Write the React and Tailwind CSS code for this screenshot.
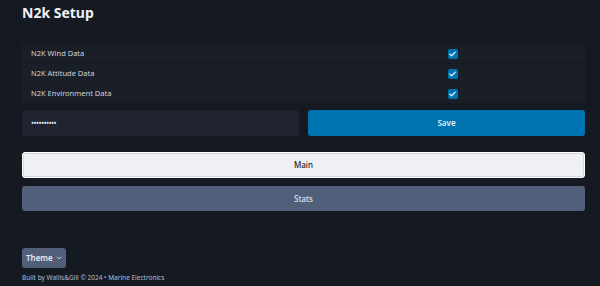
import React from "react";

function Check() {
  return (
    <span className="flex h-[10px] w-[10px] items-center justify-center rounded-[2px] bg-[#0074b0]">
      <svg width="7" height="6" viewBox="0 0 8 6" fill="none">
        <path d="M1 3.2 L3 5 L7 1" stroke="#e8eef5" strokeWidth="1.4" strokeLinecap="round" strokeLinejoin="round" />
      </svg>
    </span>
  );
}

function Row({ label }) {
  return (
    <div className="grid h-[19px] grid-cols-2 items-center bg-[#1a1e27] px-[9px]">
      <span className="pt-[1px] text-[7.5px] text-[#d0d5de]">{label}</span>
      <span className="flex items-center pl-[144px]">
        <Check />
      </span>
    </div>
  );
}

export default function App() {
  return (
    <div
      className="flex h-[286px] w-[600px] flex-col bg-[#151922] pl-[22px] pr-[15px] text-[#d8dce4]"
      style={{ fontFamily: '"Noto Sans", "Open Sans", sans-serif' }}
    >
      <h1 className="mt-[2px] h-[22px] text-[14px] font-bold leading-[22px] text-[#eef0f4]">N2k Setup</h1>
      <div className="mt-[20px] flex flex-col gap-px">
        <Row label="N2K Wind Data" />
        <Row label="N2K Attitude Data" />
        <Row label="N2K Environment Data" />
      </div>
      <div className="mt-[7px] grid grid-cols-2 gap-[9px]">
        <div className="flex h-[26px] items-center rounded-[3px] bg-[#1f2330] px-[9px] text-[8px] tracking-[-0.5px] text-[#dfe3ea]">
          ••••••••••
        </div>
        <button className="h-[26px] rounded-[3px] bg-[#0074b0] text-[8px] font-semibold text-[#e4ecf4]">Save</button>
      </div>
      <button className="mt-[16px] h-[26px] rounded-[3px] border border-[#ffffff] bg-[#eef0f4] text-[8px] font-medium text-[#1b1f28] shadow-[0_0_0_1px_#d3d7de_inset]">
        Main
      </button>
      <button className="mt-[8px] h-[25px] rounded-[3px] bg-[#525f7a] text-[8px] font-medium text-[#dfe3ea]">Stats</button>
      <div className="mt-[37px] flex">
        <button className="flex h-[20px] items-center gap-[3px] rounded-[3px] bg-[#525f7a] px-[4px] text-[8px] font-semibold text-[#e6e9ef]">
          Theme
          <svg width="6" height="6" viewBox="0 0 10 10" fill="none">
            <path d="M2 3.5 L5 6.5 L8 3.5" stroke="#e6e9ef" strokeWidth="1.5" strokeLinecap="round" strokeLinejoin="round" />
          </svg>
        </button>
      </div>
      <p className="mt-[5px] text-[6.5px] text-[#b7bdc9]">Built by Wallis&amp;Gill © 2024 • Marine Electronics</p>
    </div>
  );
}
